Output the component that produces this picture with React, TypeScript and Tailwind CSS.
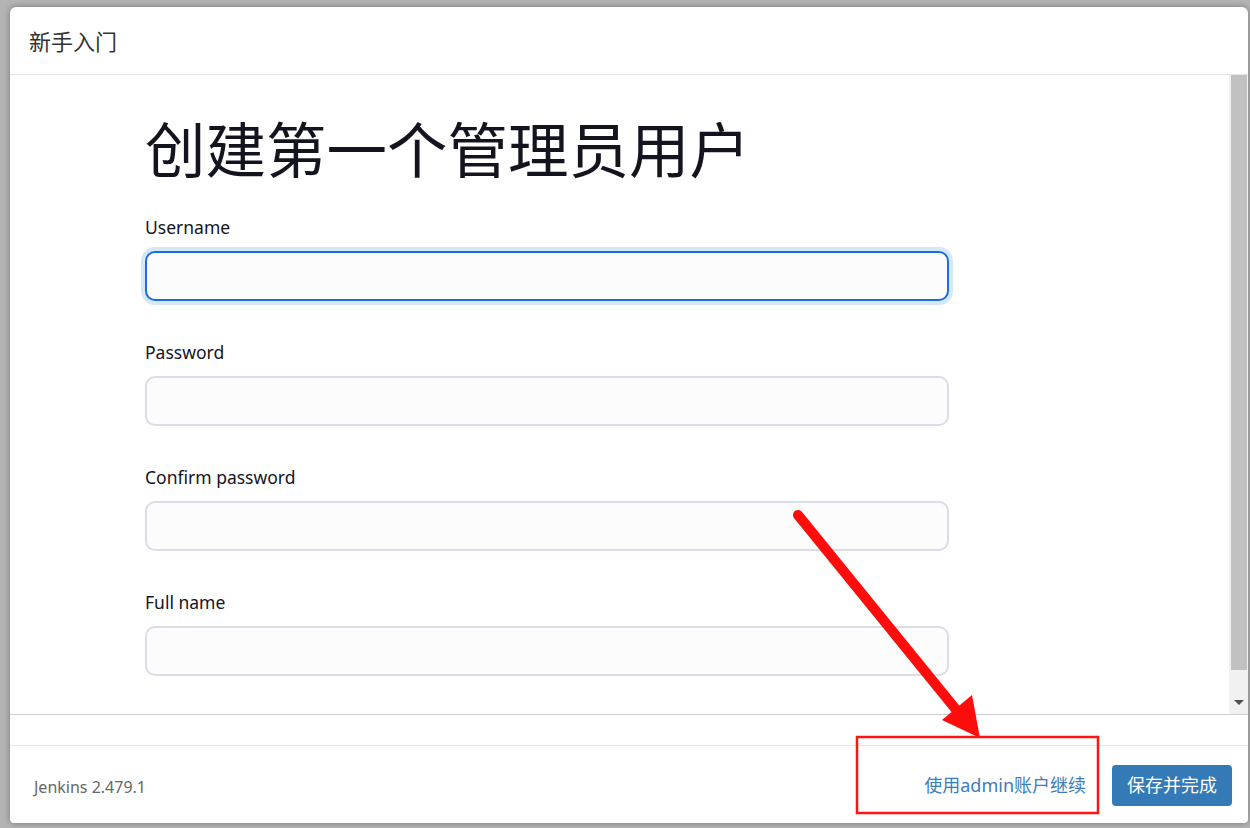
import React from "react";

const font = { fontFamily: '"Noto Sans", "Noto Sans CJK SC", sans-serif' };

function Field({ label, focused }: { label: string; focused?: boolean }) {
  return (
    <div className="flex flex-col">
      <label className="text-[17.5px] leading-[24px] text-[#14141f] h-[24px]">{label}</label>
      <div className="h-[12px]" />
      <input
        className={
          focused
            ? "h-[50px] w-[804px] rounded-[10px] border-2 border-[#1b6fd8] bg-[#fcfcfd] outline-none shadow-[0_0_0_4px_#d7e7fa]"
            : "h-[50px] w-[804px] rounded-[10px] border-2 border-[#dadde6] bg-[#fcfcfd] outline-none"
        }
        type="text"
      />
    </div>
  );
}

export default function App() {
  return (
    <div
      className="relative w-[1250px] h-[828px] overflow-hidden bg-[#b4b4b4] pt-[7px] pl-[10px]"
      style={font}
    >
      <div className="w-[1238px] h-[816px] bg-white rounded-t-[6px] rounded-b-[4px] flex flex-col shadow-[0_0_6px_rgba(0,0,0,0.35)] overflow-hidden">
        {/* header */}
        <div className="h-[68px] shrink-0 border-b border-[#e5e5e5] pl-[19px] flex items-center text-[22px] text-[#333]">
          <span className="mt-[2px]">新手入门</span>
        </div>
        {/* body */}
        <div className="h-[640px] shrink-0 flex border-b border-[#cfcfcf]">
          <div className="flex-1 pl-[135px] pt-[30px]">
            <h1 className="text-[60.5px] leading-[90px] text-[#14141f] font-normal">创建第一个管理员用户</h1>
            <div className="h-[20px]" />
            <div className="flex flex-col gap-[39px]">
              <Field label="Username" focused />
              <Field label="Password" />
              <Field label="Confirm password" />
              <Field label="Full name" />
            </div>
          </div>
          <div className="w-[19px] bg-[#f1f1f1] flex flex-col items-center">
            <div className="w-[16px] h-[595px] bg-[#c1c1c1]" />
            <div className="flex-1 flex items-end pb-[9px]">
              <div className="w-0 h-0 border-l-[5px] border-r-[5px] border-t-[5px] border-l-transparent border-r-transparent border-t-[#505050]" />
            </div>
          </div>
        </div>
        <div className="h-[31px] shrink-0 border-b border-[#e5e5e5]" />
        {/* footer */}
        <div className="flex-1 flex items-center pl-[24px] pr-[16px]">
          <span className="text-[16px] text-[#666] mt-[4px]">Jenkins 2.479.1</span>
          <div className="flex-1" />
          <a className="text-[18px] text-[#3b7cc0] mr-[26px] mt-[2px]">使用admin账户继续</a>
          <button className="h-[41px] w-[120px] rounded-[4px] bg-[#337ab7] text-white text-[18px] mt-[2px]">
            保存并完成
          </button>
        </div>
      </div>

      {/* annotation overlay */}
      <svg className="absolute left-0 top-0 pointer-events-none" width="1250" height="828">
        <line x1="798" y1="515" x2="958" y2="712" stroke="#ff0d0d" strokeWidth="10" strokeLinecap="round" />
        <polygon points="942,720 972,695 980,738" fill="#ff0d0d" />
        <rect x="857" y="737" width="241" height="76" fill="none" stroke="#ff1414" strokeWidth="2.5" />
      </svg>
    </div>
  );
}
